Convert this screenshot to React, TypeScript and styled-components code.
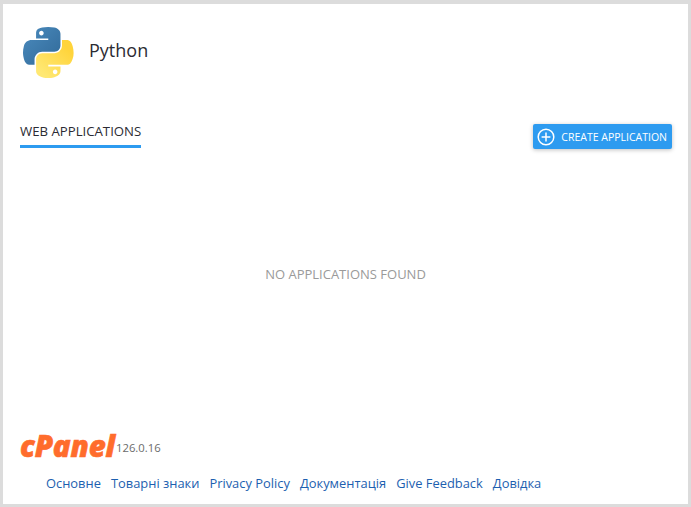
import React, { FC, ReactElement } from "react";
import styled, { createGlobalStyle } from "styled-components";

const FOOTER_LINKS: string[] = [
  "Основне",
  "Товарні знаки",
  "Privacy Policy",
  "Документація",
  "Give Feedback",
  "Довідка",
];

const GlobalStyle = createGlobalStyle`
  html, body {
    margin: 0;
    padding: 0;
    overflow: hidden;
  }
  body {
    font-family: "Open Sans", "Noto Sans", sans-serif;
  }
`;

const PythonLogo: FC = (): ReactElement => (
  <StyledLogo viewBox="0 0 112 112" aria-label="Python">
    <defs>
      <linearGradient id="pyBlue" x1="0" y1="0" x2="1" y2="1">
        <stop offset="0" stopColor="#4b8bbe" />
        <stop offset="1" stopColor="#306998" />
      </linearGradient>
      <linearGradient id="pyYellow" x1="0.2" y1="0.9" x2="0.8" y2="0.2">
        <stop offset="0" stopColor="#ffe873" />
        <stop offset="1" stopColor="#ffd43b" />
      </linearGradient>
    </defs>
    <path
      fill="url(#pyBlue)"
      d="M54.92 0C50.34.02 45.96.41 42.11 1.09 30.76 3.1 28.7 7.29 28.7 15.03v10.22h26.81v3.41H18.64c-7.79 0-14.62 4.68-16.75 13.59-2.46 10.21-2.57 16.59 0 27.25C3.79 77.44 8.35 83.09 16.14 83.09h9.22V70.84c0-8.85 7.66-16.65 16.75-16.65h26.78c7.45 0 13.41-6.14 13.41-13.63V15.03c0-7.27-6.13-12.72-13.41-13.94C64.28.33 59.5-.02 54.92 0ZM40.42 8.22c2.77 0 5.03 2.3 5.03 5.12s-2.26 5.1-5.03 5.1c-2.78 0-5.03-2.28-5.03-5.1s2.25-5.12 5.03-5.12Z"
    />
    <path
      fill="url(#pyYellow)"
      d="M85.64 28.66v11.9c0 9.23-7.83 17-16.75 17H42.11c-7.34 0-13.41 6.28-13.41 13.63v25.53c0 7.27 6.32 11.54 13.41 13.63 8.49 2.49 16.63 2.95 26.78 0 6.75-1.96 13.41-5.89 13.41-13.63V86.5H55.51v-3.41h40.19c7.79 0 10.7-5.43 13.41-13.59 2.8-8.4 2.68-16.48 0-27.25-1.93-7.76-5.61-13.59-13.41-13.59H85.64ZM70.58 93.31c2.78 0 5.03 2.28 5.03 5.1s-2.25 5.12-5.03 5.12c-2.77 0-5.03-2.3-5.03-5.12s2.26-5.1 5.03-5.1Z"
    />
  </StyledLogo>
);

const PlusIcon: FC = (): ReactElement => (
  <StyledPlusIcon viewBox="0 0 18 18" aria-hidden="true">
    <circle cx="9" cy="9" r="7.8" fill="none" stroke="#fff" strokeWidth="1.5" />
    <path d="M9 4.6v8.8M4.6 9h8.8" fill="none" stroke="#fff" strokeWidth="1.5" />
  </StyledPlusIcon>
);

export default function App(): ReactElement {
  return (
    <>
      <GlobalStyle />
      <StyledFrame>
        <StyledPanel>
          <StyledHeader>
            <PythonLogo />
            <StyledTitle>Python</StyledTitle>
          </StyledHeader>
          <StyledTabsRow>
            <StyledTab>WEB APPLICATIONS</StyledTab>
            <StyledCreateButton>
              <PlusIcon />
              CREATE APPLICATION
            </StyledCreateButton>
          </StyledTabsRow>
          <StyledEmpty>NO APPLICATIONS FOUND</StyledEmpty>
          <StyledBrandRow>
            <StyledBrand>cPanel</StyledBrand>
            <StyledVersion>126.0.16</StyledVersion>
          </StyledBrandRow>
          <StyledFooterLinks>
            {FOOTER_LINKS.map((label: string) => (
              <StyledFooterLink key={label} href="#">
                {label}
              </StyledFooterLink>
            ))}
          </StyledFooterLinks>
        </StyledPanel>
      </StyledFrame>
    </>
  );
}

const StyledFrame = styled.div`
  box-sizing: border-box;
  width: 691px;
  height: 507px;
  padding: 4px 3px 3px;
  background: #dcdcdc;
`;

const StyledPanel = styled.div`
  display: flex;
  flex-direction: column;
  height: 100%;
  background: #fff;
`;

const StyledHeader = styled.header`
  display: flex;
  align-items: center;
  height: 52px;
  padding: 22px 0 0 20px;
`;

const StyledLogo = styled.svg`
  width: 51px;
  height: 51px;
`;

const StyledTitle = styled.h1`
  margin: 0 0 4px 15px;
  font-size: 18px;
  font-weight: 400;
  line-height: 24px;
  color: #2b2b33;
`;

const StyledTabsRow = styled.div`
  display: flex;
  justify-content: space-between;
  align-items: flex-start;
  margin-top: 45px;
  padding: 0 16px 0 17px;
`;

const StyledTab = styled.div`
  padding-bottom: 5px;
  border-bottom: 3px solid #2d9bf0;
  font-size: 13.2px;
  line-height: 17px;
  color: #2b2b33;
`;

const StyledCreateButton = styled.button`
  display: flex;
  align-items: center;
  gap: 6px;
  height: 25px;
  margin-top: 1px;
  padding: 0 5px 0 4px;
  border: none;
  border-radius: 2px;
  background: #2d9bf0;
  box-shadow: 0 1px 4px rgba(0, 0, 0, 0.25);
  font-family: inherit;
  font-size: 10.5px;
  color: #fff;
`;

const StyledPlusIcon = styled.svg`
  width: 18px;
  height: 18px;
`;

const StyledEmpty = styled.div`
  flex: 1;
  display: flex;
  justify-content: center;
  align-items: center;
  padding-bottom: 36px;
  font-size: 13px;
  color: #9a9a9a;
`;

const StyledBrandRow = styled.div`
  display: flex;
  align-items: flex-end;
  padding-left: 17px;
`;

const StyledBrand = styled.span`
  font-size: 29.5px;
  font-weight: 800;
  font-style: italic;
  line-height: 24px;
  letter-spacing: -0.2px;
  color: #ff6c2c;
  -webkit-text-stroke: 0.6px #ff6c2c;
`;

const StyledVersion = styled.span`
  margin: 0 0 2px 1px;
  font-size: 11.3px;
  line-height: 16px;
  color: #6b6b6b;
`;

const StyledFooterLinks = styled.nav`
  display: flex;
  gap: 10px;
  padding: 17px 0 12px 43px;
`;

const StyledFooterLink = styled.a`
  font-size: 12.9px;
  line-height: 17px;
  color: #1d5fb0;
  text-decoration: none;
`;
